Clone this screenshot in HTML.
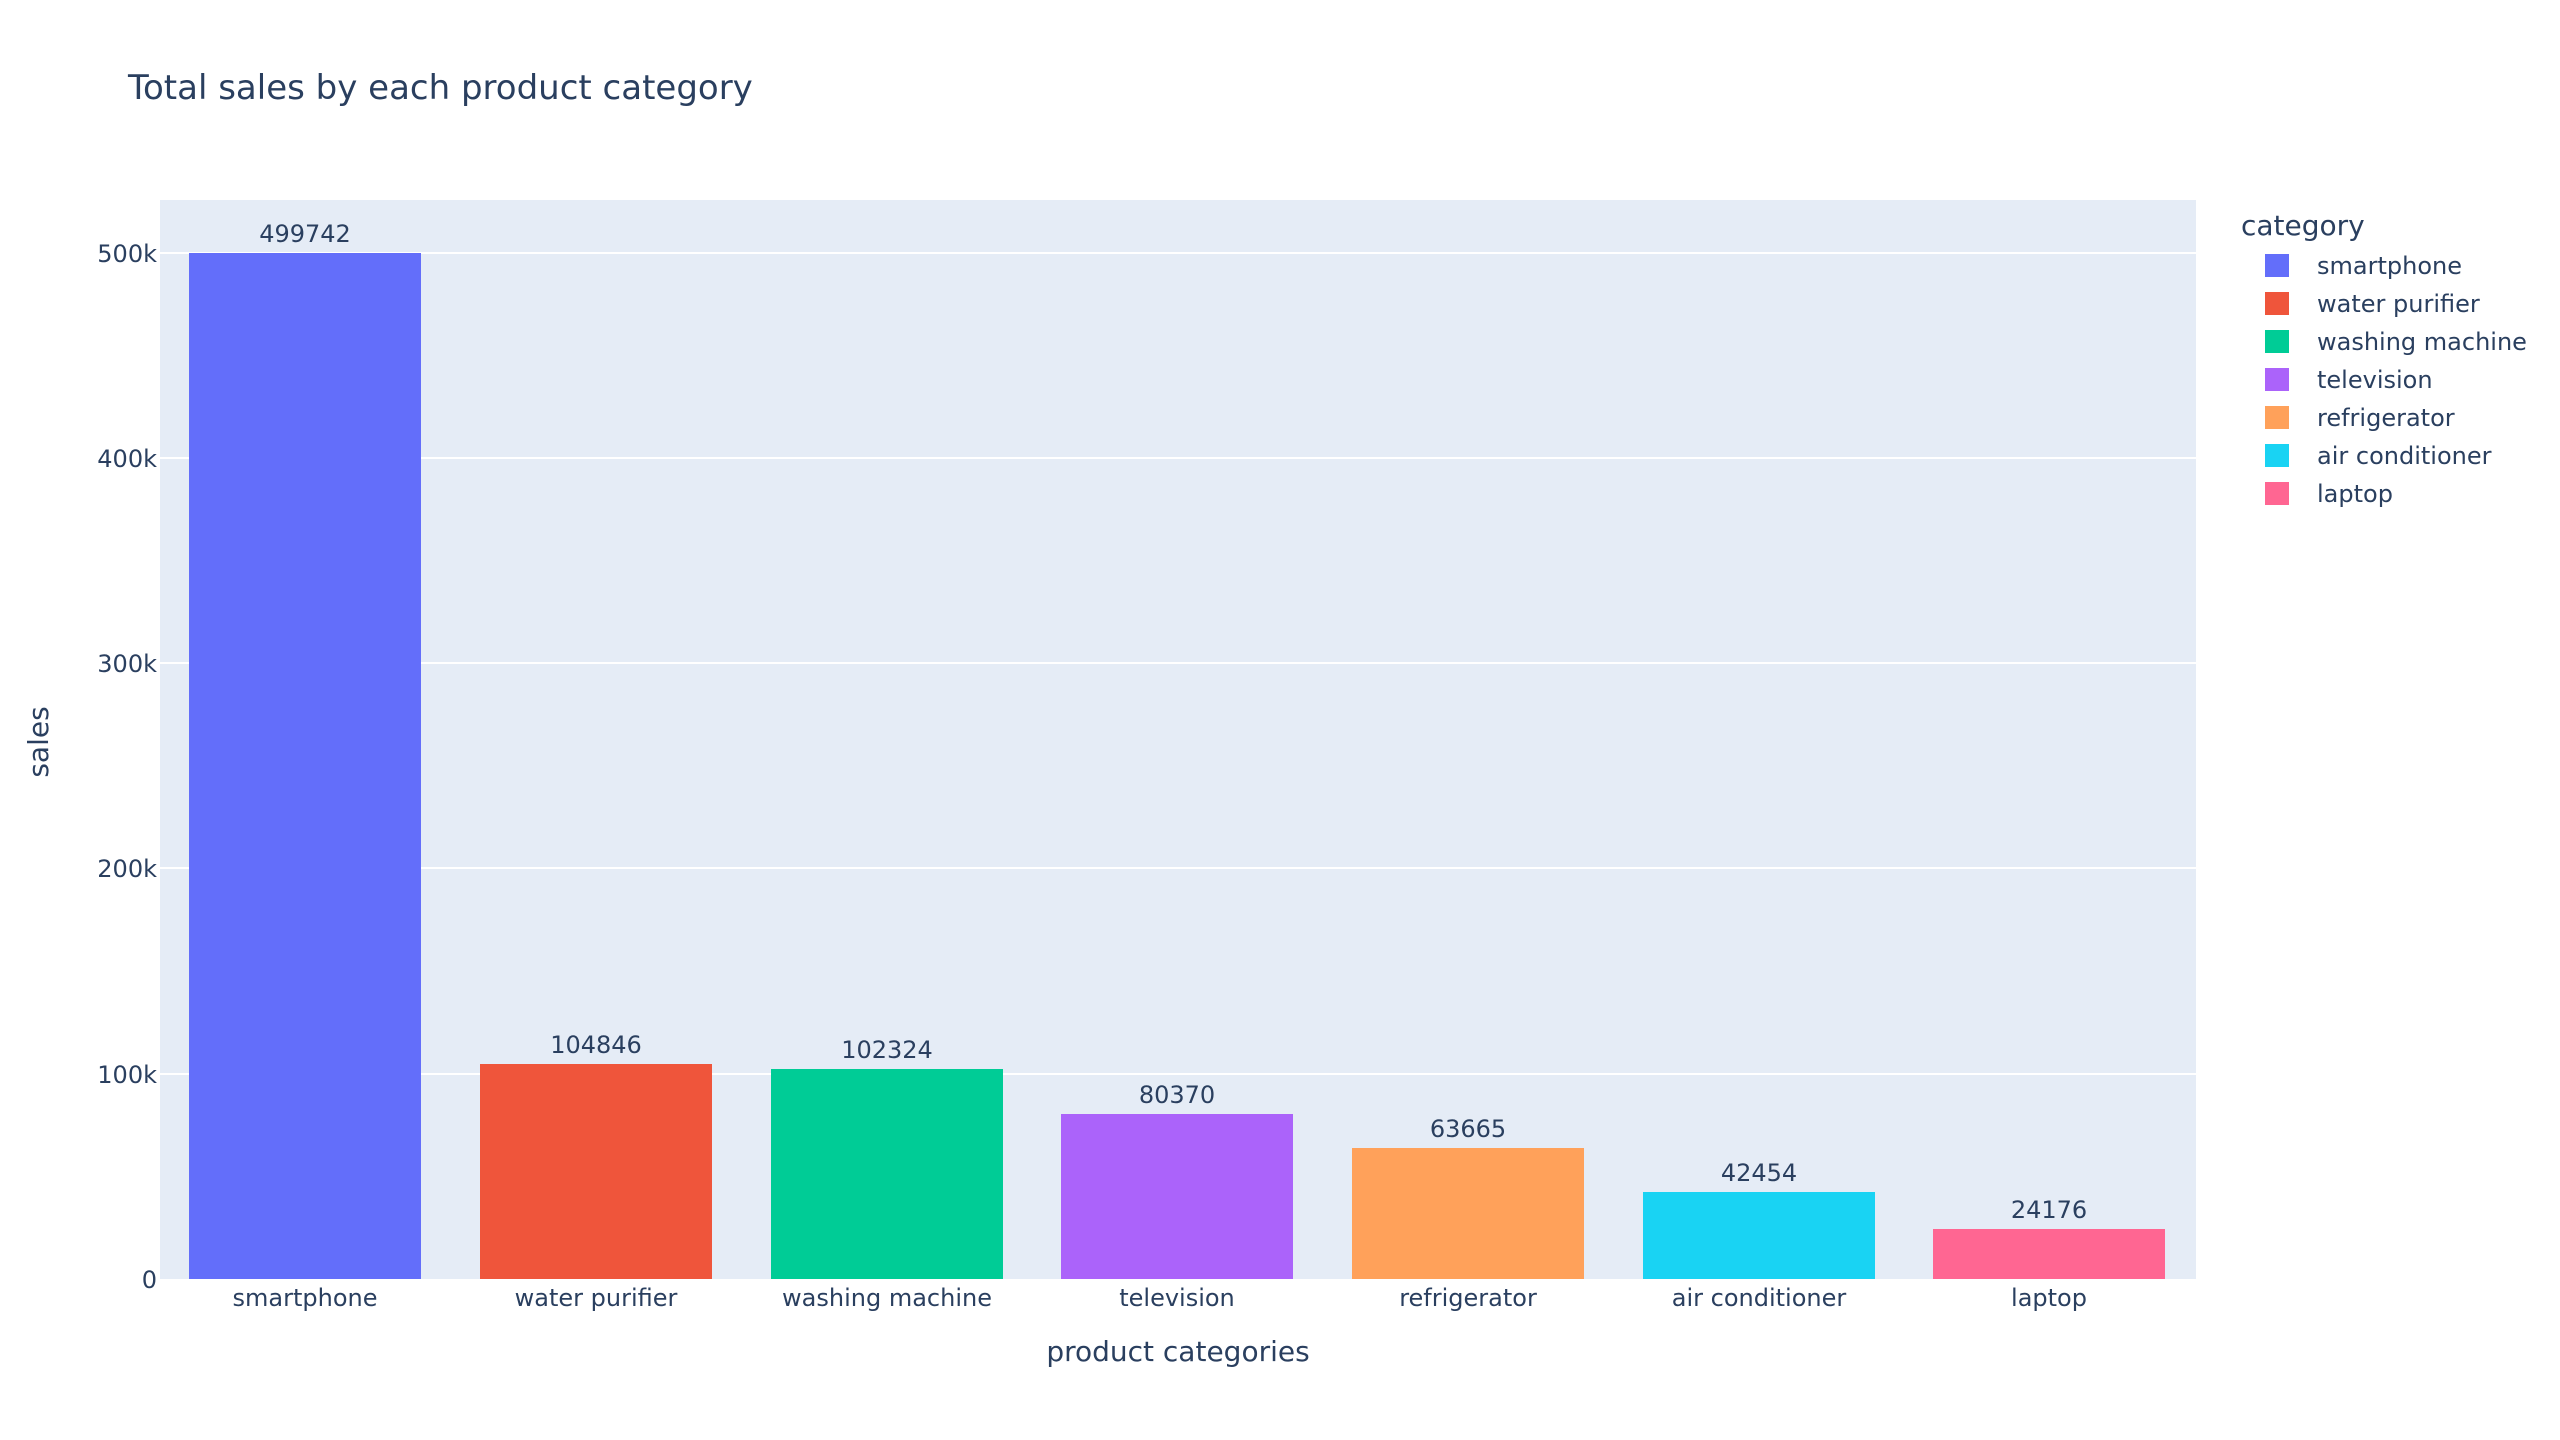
<!DOCTYPE html>
<html><head><meta charset="utf-8"><style>
html,body{margin:0;padding:0;background:#fff;}
svg{display:block;font-family:"DejaVu Sans","Liberation Sans",sans-serif;fill:#2a3f5f;}
</style></head><body>
<svg width="2560" height="1440" viewBox="0 0 2560 1440" xmlns="http://www.w3.org/2000/svg">
<rect x="0" y="0" width="2560" height="1440" fill="#fff"/>
<text x="128" y="99" font-size="34">Total sales by each product category</text>
<rect x="160" y="200" width="2036" height="1079" fill="#E5ECF6"/>
<g stroke="#fff" stroke-width="2">
<line x1="160" x2="2196" y1="1074" y2="1074"/>
<line x1="160" x2="2196" y1="868" y2="868"/>
<line x1="160" x2="2196" y1="663" y2="663"/>
<line x1="160" x2="2196" y1="458" y2="458"/>
<line x1="160" x2="2196" y1="253" y2="253"/>
</g>
<g font-size="24" text-anchor="end">
<text x="157" y="1288">0</text>
<text x="157" y="1083">100k</text>
<text x="157" y="877">200k</text>
<text x="157" y="672">300k</text>
<text x="157" y="467">400k</text>
<text x="157" y="262">500k</text>
</g>
<g>
<rect x="189" y="253" width="232" height="1026" fill="#636efa"/>
<rect x="480" y="1064" width="232" height="215" fill="#EF553B"/>
<rect x="771" y="1069" width="232" height="210" fill="#00cc96"/>
<rect x="1061" y="1114" width="232" height="165" fill="#ab63fa"/>
<rect x="1352" y="1148" width="232" height="131" fill="#FFA15A"/>
<rect x="1643" y="1192" width="232" height="87" fill="#19d3f3"/>
<rect x="1933" y="1229" width="232" height="50" fill="#FF6692"/>
</g>
<g font-size="24" text-anchor="middle">
<text x="305" y="242">499742</text>
<text x="596" y="1053">104846</text>
<text x="887" y="1058">102324</text>
<text x="1177" y="1103">80370</text>
<text x="1468" y="1137">63665</text>
<text x="1759" y="1181">42454</text>
<text x="2049" y="1218">24176</text>
</g>
<g font-size="24" text-anchor="middle">
<text x="305" y="1306">smartphone</text>
<text x="596" y="1306">water purifier</text>
<text x="887" y="1306">washing machine</text>
<text x="1177" y="1306">television</text>
<text x="1468" y="1306">refrigerator</text>
<text x="1759" y="1306">air conditioner</text>
<text x="2049" y="1306">laptop</text>
</g>
<text x="1178" y="1361" font-size="28" text-anchor="middle">product categories</text>
<text transform="translate(48,742) rotate(-90)" font-size="28" text-anchor="middle">sales</text>
<text x="2241" y="235" font-size="28">category</text>
<g>
<rect x="2265" y="254" width="24" height="23" fill="#636efa"/>
<rect x="2265" y="292" width="24" height="23" fill="#EF553B"/>
<rect x="2265" y="330" width="24" height="23" fill="#00cc96"/>
<rect x="2265" y="368" width="24" height="23" fill="#ab63fa"/>
<rect x="2265" y="406" width="24" height="23" fill="#FFA15A"/>
<rect x="2265" y="444" width="24" height="23" fill="#19d3f3"/>
<rect x="2265" y="482" width="24" height="23" fill="#FF6692"/>
</g>
<g font-size="24">
<text x="2317" y="274">smartphone</text>
<text x="2317" y="312">water purifier</text>
<text x="2317" y="350">washing machine</text>
<text x="2317" y="388">television</text>
<text x="2317" y="426">refrigerator</text>
<text x="2317" y="464">air conditioner</text>
<text x="2317" y="502">laptop</text>
</g>
</svg>
</body></html>
